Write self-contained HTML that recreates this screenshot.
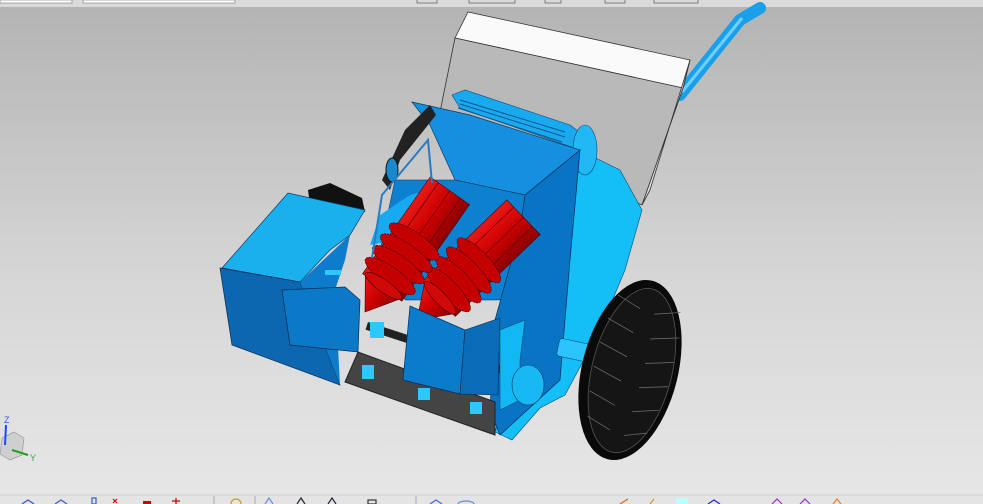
<!DOCTYPE html>
<html><head><meta charset="utf-8"><style>
html,body{margin:0;padding:0;width:983px;height:504px;overflow:hidden;font-family:"Liberation Sans",sans-serif}
</style></head><body>
<svg width="983" height="504" viewBox="0 0 983 504" xmlns="http://www.w3.org/2000/svg" style="display:block">
<defs>
<linearGradient id="bg" x1="0" y1="0" x2="0" y2="1">
<stop offset="0" stop-color="#b3b3b3"/><stop offset="0.55" stop-color="#d6d6d6"/><stop offset="1" stop-color="#e7e7e8"/>
</linearGradient>
<linearGradient id="cyl" x1="0" y1="0" x2="0" y2="1">
<stop offset="0" stop-color="#e81818"/><stop offset="0.5" stop-color="#cc0000"/><stop offset="1" stop-color="#8a0000"/>
</linearGradient>
<g id="roller">
<rect x="30" y="-24" width="118" height="48" fill="url(#cyl)" stroke="#4a0000" stroke-width="0.6"/>
<g fill="none" stroke="#5a0000" stroke-width="0.7"><line x1="90" y1="-14" x2="148" y2="-14"/><line x1="90" y1="0" x2="148" y2="0"/><line x1="90" y1="13" x2="148" y2="13"/></g>
<g fill="#c40000" stroke="#4a0000" stroke-width="0.7" stroke-dasharray="2 1">
<ellipse cx="86" cy="0" rx="9" ry="30"/><ellipse cx="72" cy="0" rx="9" ry="31"/><ellipse cx="58" cy="0" rx="9" ry="31"/><ellipse cx="44" cy="0" rx="9" ry="30"/>
</g>
<path d="M0 0 L32 -22 L32 22 Z" fill="url(#cyl)" stroke="#4a0000" stroke-width="0.6"/>
<ellipse cx="32" cy="0" rx="6" ry="22" fill="#d00808" stroke="#4a0000" stroke-width="0.6"/>
</g>
</defs>
<rect width="983" height="504" fill="url(#bg)"/>
<rect width="983" height="7" fill="#dadada"/>
<rect x="0" y="0" width="72" height="3" fill="#fff" stroke="#888" stroke-width="0.7"/>
<rect x="83" y="0" width="152" height="3" fill="#fff" stroke="#888" stroke-width="0.7"/>
<g fill="none" stroke="#666" stroke-width="0.8">
<rect x="417" y="-3" width="20" height="6"/><rect x="469" y="-3" width="46" height="6"/>
<rect x="545" y="-3" width="16" height="6"/><rect x="605" y="-3" width="20" height="6"/><rect x="654" y="-3" width="44" height="6"/>
</g>
<path d="M680 95 L740 20 L760 8" stroke="#1aa0ea" stroke-width="12" fill="none" stroke-linecap="round"/>
<path d="M682 92 L742 18" stroke="#6fd0ff" stroke-width="3" fill="none"/>
<path d="M308 190 L330 183 L362 198 L365 212 L340 215 L310 205Z" fill="#111"/>
<polygon points="455,38 468,12 690,60 683,88" fill="#fafafa" stroke="#333" stroke-width="0.8"/>
<polygon points="455,38 683,88 642,205 440,112" fill="#b9b9b9" stroke="#333" stroke-width="0.8"/>
<polygon points="683,88 690,60 650,190 642,205" fill="#dcdcdc" stroke="#333" stroke-width="0.8"/>
<polygon points="575,148 620,170 642,210 625,270 600,330 565,395 540,408 512,440 495,432 525,330 560,230" fill="#14bff8" stroke="#0a4a7a" stroke-width="0.6"/>
<polygon points="452,95 465,90 570,125 590,140 595,165 580,150 460,108" fill="#1aa8ee" stroke="#0a4a7a" stroke-width="0.6"/>
<g stroke="#0a5a90" stroke-width="1"><line x1="460" y1="100" x2="565" y2="132"/><line x1="460" y1="104" x2="565" y2="137"/><line x1="458" y1="108" x2="562" y2="142"/></g>
<ellipse cx="585" cy="150" rx="12" ry="25" fill="#22b8f5" stroke="#0a4a7a" stroke-width="0.6"/>
<polygon points="412,102 470,115 580,150 525,195 455,180 430,125" fill="#1590e0" stroke="#0a3a60" stroke-width="0.7"/>
<polygon points="395,180 455,180 525,195 530,215 510,300 405,300 380,250" fill="#0d80d0" stroke="#082c50" stroke-width="0.5"/>
<polygon points="380,215 410,195 430,190 400,240 370,245" fill="#18aaf0"/>
<polygon points="525,195 580,150 570,260 560,380 500,435 490,410 495,320 520,230" fill="#0a74c4" stroke="#082c50" stroke-width="0.7"/>
<path d="M405 130 L430 105 L436 115 L400 160 L390 190 L382 180Z" fill="#222"/>
<ellipse cx="392" cy="170" rx="6" ry="12" fill="#1a88cc" stroke="#111"/>
<polygon points="222,268 288,193 365,210 350,235 330,250 300,282" fill="#1ab0ee" stroke="#083a60" stroke-width="0.7"/>
<polygon points="220,268 300,282 340,385 232,345" fill="#0c66b0" stroke="#082c50" stroke-width="0.7"/>
<polygon points="300,282 350,235 345,260 335,290 340,385" fill="#0d7ccc"/>
<use href="#roller" transform="translate(417 320) rotate(-44)"/>
<use href="#roller" transform="translate(365 312) rotate(-55)"/>
<path d="M372 258 L382 195 L428 140 L432 183" stroke="#2a7bbf" stroke-width="2" fill="none"/>
<polygon points="282,290 345,287 360,300 358,352 290,345" fill="#0b78c8" stroke="#082c50" stroke-width="0.7"/>
<rect x="325" y="270" width="16" height="5" fill="#2ec8ff"/>
<polygon points="345,382 358,352 495,402 495,435" fill="#444" stroke="#222"/>
<rect x="368" y="322" width="150" height="8" transform="rotate(18 368 322)" fill="#222"/>
<g fill="#2ec8ff"><rect x="362" y="365" width="12" height="14"/><rect x="418" y="388" width="12" height="12"/><rect x="470" y="402" width="12" height="12"/><rect x="370" y="322" width="14" height="16"/></g>
<polygon points="410,306 465,330 460,394 403,380" fill="#0b7ccc" stroke="#082c50" stroke-width="0.7"/>
<polygon points="465,330 500,318 498,395 460,394" fill="#0a6cb8" stroke="#082c50" stroke-width="0.6"/>
<polygon points="500,330 525,320 520,360 520,400 500,410" fill="#12b8f4" stroke="#083a60" stroke-width="0.5"/>
<ellipse cx="528" cy="385" rx="16" ry="20" fill="#18b8f4" stroke="#083a60" stroke-width="0.6"/>
<rect x="560" y="338" width="45" height="18" rx="3" transform="rotate(12 560 338)" fill="#2cc4ff" stroke="#083a60" stroke-width="0.5"/>
<g transform="rotate(14 630 370)">
<ellipse cx="630" cy="370" rx="48" ry="92" fill="#0a0a0a"/>
<ellipse cx="632" cy="370" rx="40" ry="84" fill="#151515" stroke="#555" stroke-width="0.8"/>
<g stroke="#666" stroke-width="0.8" fill="none">
<path d="M600 300 l25 8"/><path d="M596 325 l28 8"/><path d="M594 350 l30 8"/><path d="M594 375 l30 8"/><path d="M596 400 l28 8"/><path d="M600 425 l25 8"/>
<path d="M640 310 l25 -8"/><path d="M642 335 l28 -8"/><path d="M643 360 l28 -8"/><path d="M643 385 l28 -8"/><path d="M642 410 l26 -8"/><path d="M640 435 l22 -8"/>
</g>
</g>
<g>
<polygon points="2,438 14,432 24,438 22,455 10,460 0,454" fill="#cfcfcf" stroke="#999" stroke-width="0.7"/>
<line x1="5" y1="445" x2="6" y2="425" stroke="#1a4cff" stroke-width="2"/>
<text x="4" y="423" font-size="9" fill="#2a5cff">Z</text>
<line x1="12" y1="450" x2="28" y2="455" stroke="#20a020" stroke-width="2"/>
<text x="30" y="461" font-size="9" fill="#40a040">Y</text>
</g>
<rect x="0" y="495" width="983" height="9" fill="#e4e4e4"/>
<line x1="0" y1="495" x2="983" y2="495" stroke="#d0d0d0"/>
<g fill="none" stroke-width="1.2">
<path d="M22 504 l6-4 6 4" stroke="#3a5ac0"/><path d="M55 504 l6-4 6 4" stroke="#3a5ac0"/>
<rect x="92" y="498" width="4" height="6" stroke="#3a5ac0"/>
<path d="M113 499 l4 4 M117 499 l-4 4" stroke="#d00"/>
<rect x="143" y="501" width="8" height="3" fill="#c00" stroke="none"/>
<path d="M176 498 v6 M172 501 h8" stroke="#c00"/>
<circle cx="236" cy="504" r="5" stroke="#c8a020"/>
<path d="M265 504 l4-6 4 6" stroke="#6a8ae0"/><path d="M297 504 l4-6 4 6" stroke="#223"/><path d="M328 504 l4-6 4 6" stroke="#223"/>
<rect x="368" y="500" width="8" height="4" stroke="#333"/>
<path d="M430 504 l6-4 6 4" stroke="#4a6ad0"/><ellipse cx="466" cy="504" rx="8" ry="3" stroke="#6a8ae0"/>
<path d="M620 504 l8-5" stroke="#e06020"/><path d="M650 504 l4-5" stroke="#e09020"/>
<rect x="676" y="498" width="12" height="6" fill="#bff" stroke="none"/>
<path d="M708 504 l6-4 6 4" stroke="#2030c0"/>
<path d="M772 504 l5-5 5 5" stroke="#a030d0"/><path d="M800 504 l5-5 5 5" stroke="#a030d0"/>
<path d="M833 504 l4-5 4 5" stroke="#e08030"/>
</g>
<line x1="214" y1="496" x2="214" y2="504" stroke="#aaa"/><line x1="255" y1="496" x2="255" y2="504" stroke="#aaa"/><line x1="416" y1="496" x2="416" y2="504" stroke="#aaa"/>
</svg>
</body></html>
